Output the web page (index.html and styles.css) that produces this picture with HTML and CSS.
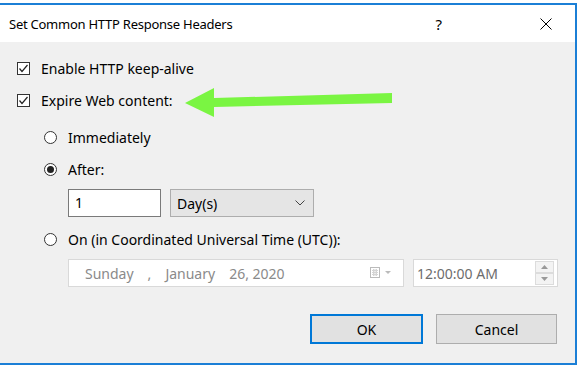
FILE: index.html
```html
<!DOCTYPE html>
<html lang="en">

<head>
  <meta charset="UTF-8" />
  <title>Set Common HTTP Response Headers</title>
  <link rel="stylesheet" href="styles.css">
</head>

<body>
  <div id="dialog">
    <div id="titlebar">
      <span class="title">Set Common HTTP Response Headers</span>
      <span class="help">?</span>
      <svg class="close" width="12" height="12" viewBox="0 0 12 12">
        <path d="M0.5 0.5 L11.5 11.5 M11.5 0.5 L0.5 11.5" stroke="#000" stroke-width="1" fill="none" />
      </svg>
    </div>

    <div id="content">
      <div class="row check-row">
        <span class="checkbox">
          <svg width="11" height="11" viewBox="0 0 11 11">
            <path d="M1.5 5.5 L4 8.5 L9.5 2" stroke="#222" stroke-width="1.2" fill="none" />
          </svg>
        </span>
        <label>Enable HTTP keep-alive</label>
      </div>
      <div class="row check-row">
        <span class="checkbox">
          <svg width="11" height="11" viewBox="0 0 11 11">
            <path d="M1.5 5.5 L4 8.5 L9.5 2" stroke="#222" stroke-width="1.2" fill="none" />
          </svg>
        </span>
        <label>Expire Web content:</label>
      </div>

      <div class="row radio-row first-radio">
        <span class="radio"></span>
        <label>Immediately</label>
      </div>
      <div class="row radio-row">
        <span class="radio checked"></span>
        <label>After:</label>
      </div>
      <div class="row field-row after-fields">
        <div class="textbox">1</div>
        <div class="select">
          <span>Day(s)</span>
          <svg width="10" height="6" viewBox="0 0 10 6">
            <path d="M0.5 0.5 L5 5 L9.5 0.5" stroke="#444" stroke-width="1" fill="none" />
          </svg>
        </div>
      </div>
      <div class="row radio-row on-radio">
        <span class="radio"></span>
        <label>On (in Coordinated Universal Time (UTC)):</label>
      </div>
      <div class="row field-row date-fields">
        <div class="datebox">
          <span class="d-day">Sunday</span>
          <span class="d-comma">,</span>
          <span class="d-month">January</span>
          <span class="d-rest">26, 2020</span>
          <svg class="cal" width="24" height="12" viewBox="0 0 24 12">
            <rect x="0.5" y="0.5" width="9" height="10" fill="#fff" stroke="#bbb" />
            <path d="M2 3.5 H8 M2 5.5 H8 M2 7.5 H8 M3.5 2 V9 M5 2 V9 M6.5 2 V9" stroke="#d4d4d4" stroke-width="1" />
            <path d="M15 4 L21 4 L18 7 Z" fill="#bbb" />
          </svg>
        </div>
        <div class="timebox">
          <span>12:00:00 AM</span>
          <div class="spin">
            <div class="spin-btn"><svg width="7" height="4" viewBox="0 0 7 4"><path d="M0 4 L3.5 0 L7 4 Z" fill="#999" /></svg></div>
            <div class="spin-btn"><svg width="7" height="4" viewBox="0 0 7 4"><path d="M0 0 L3.5 4 L7 0 Z" fill="#999" /></svg></div>
          </div>
        </div>
      </div>

      <div class="row buttons">
        <button class="btn default">OK</button>
        <button class="btn">Cancel</button>
      </div>
    </div>

    <svg id="arrow" width="586" height="366" viewBox="0 0 586 366">
      <polygon points="185,103 214,88 214,98 392,93 392,103 214,107 214,117" fill="#7af542" />
    </svg>
  </div>
</body>

</html>
```

FILE: styles.css
```css
body {
  margin: 0;
  padding: 0;
  background-color: #fff;
  font-family: 'Noto Sans', sans-serif;
  font-size: 14px;
  color: #000;
}

#dialog {
  position: relative;
  margin-top: 3px;
  width: 575px;
  height: 358px;
  border: 2px solid #1b7fd6;
  border-left: none;
  display: flex;
  flex-direction: column;
  overflow: hidden;
}

#titlebar {
  height: 37px;
  background-color: #fff;
  display: flex;
  align-items: center;
}

#titlebar .title {
  margin-left: 9px;
  flex: 1;
  font-size: 13px;
  letter-spacing: -0.25px;
}

#titlebar .help {
  margin-right: 98px;
  font-size: 15px;
}

#titlebar .close {
  margin-right: 23px;
}

#content {
  flex: 1;
  background-color: #f0f0f0;
  padding-top: 10px;
  display: flex;
  flex-direction: column;
}

.row {
  display: flex;
  align-items: center;
}

.check-row {
  height: 32px;
  padding-left: 17px;
}

.checkbox {
  width: 11px;
  height: 11px;
  border: 1px solid #333;
  background-color: #fff;
  margin-right: 11px;
  display: flex;
}

.radio-row {
  height: 32px;
  padding-left: 44px;
}

.first-radio {
  margin-top: 5px;
}

.radio {
  width: 11px;
  height: 11px;
  border: 1px solid #333;
  border-radius: 50%;
  background-color: #fff;
  margin-right: 11px;
  display: flex;
  align-items: center;
  justify-content: center;
}

.radio.checked::after {
  content: "";
  width: 7px;
  height: 7px;
  border-radius: 50%;
  background-color: #222;
}

.field-row {
  padding-left: 68px;
  height: 28px;
}

.after-fields {
  margin-top: 4px;
}

.textbox {
  width: 85px;
  height: 26px;
  border: 1px solid #7a7a7a;
  background-color: #fff;
  padding-left: 6px;
  line-height: 26px;
}

.select {
  margin-left: 9px;
  width: 128px;
  height: 26px;
  border: 1px solid #adadad;
  background-color: #e5e5e5;
  padding-left: 6px;
  padding-right: 8px;
  display: flex;
  align-items: center;
  justify-content: space-between;
}

.on-radio {
  margin-top: 6px;
}

.date-fields {
  margin-top: 4px;
}

.datebox {
  width: 334px;
  height: 26px;
  border: 1px solid #d9d9d9;
  background-color: #fff;
  color: #8a8a8a;
  display: flex;
  align-items: center;
}

.d-day {
  margin-left: 16px;
}

.d-comma {
  margin-left: 14px;
}

.d-month {
  margin-left: 14px;
}

.d-rest {
  margin-left: 14px;
  flex: 1;
}

.cal {
  margin-right: 9px;
}

.timebox {
  margin-left: 9px;
  width: 140px;
  height: 26px;
  border: 1px solid #d9d9d9;
  background-color: #fff;
  color: #6d6d6d;
  padding-left: 3px;
  display: flex;
  align-items: center;
  justify-content: space-between;
}

.spin {
  display: flex;
  flex-direction: column;
  margin-right: 3px;
}

.spin-btn {
  width: 17px;
  height: 10px;
  border: 1px solid #dcdcdc;
  background-color: #f3f3f3;
  display: flex;
  align-items: center;
  justify-content: center;
}

.buttons {
  margin-top: 27px;
  padding-left: 310px;
  gap: 13px;
}

.btn {
  font-family: 'Noto Sans', sans-serif;
  font-size: 14px;
  color: #000;
  height: 30px;
  background-color: #e1e1e1;
  border: 1px solid #adadad;
  padding: 0;
}

.btn.default {
  width: 113px;
  border: 2px solid #0078d7;
}

.btn:not(.default) {
  width: 121px;
}

#arrow {
  position: absolute;
  left: 0;
  top: -5px;
  pointer-events: none;
}
```
